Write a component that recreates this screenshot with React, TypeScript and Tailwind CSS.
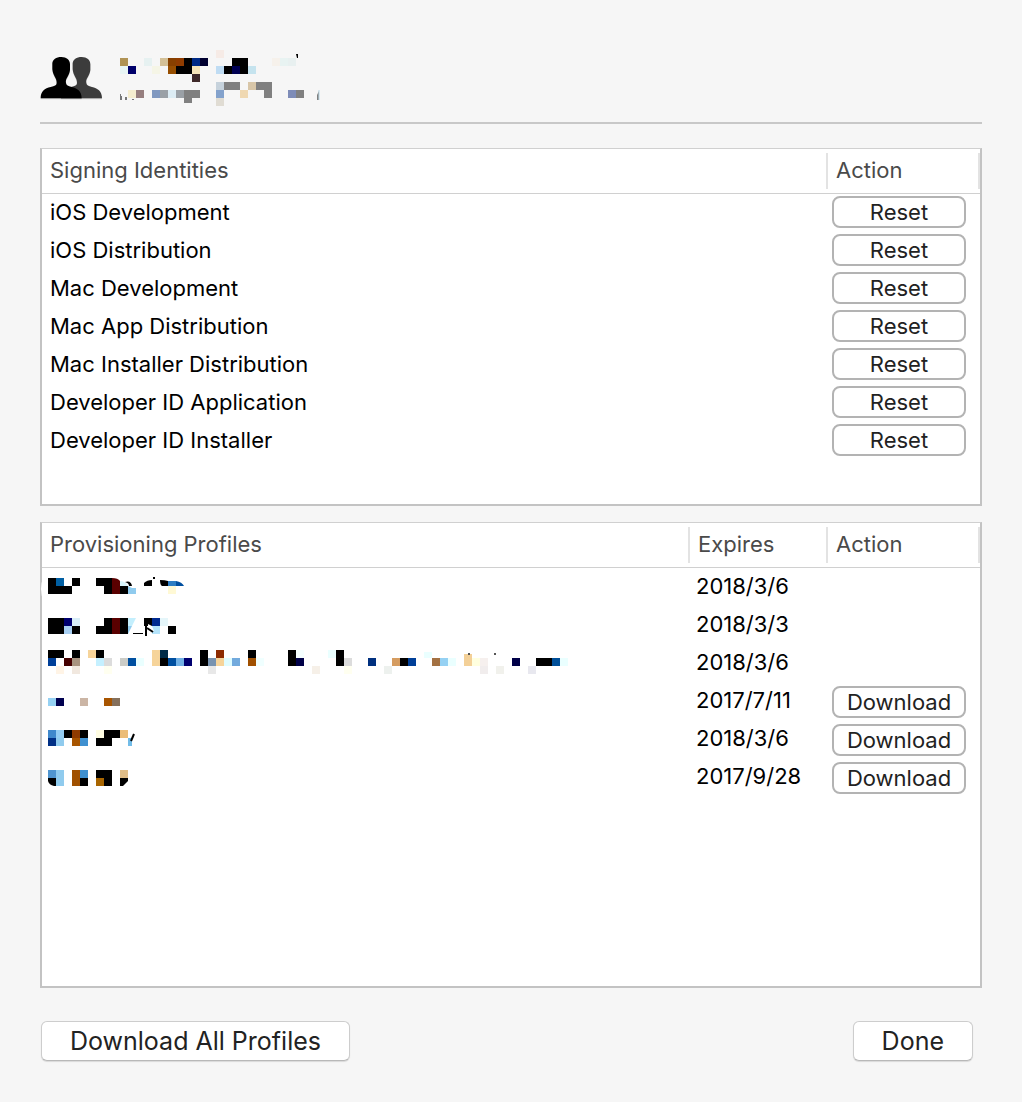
import type { ReactNode } from "react";

type Run = { x: number; y: number; c: string[]; w?: number; h?: number };

const K = "#000000";
const _ = "none";

/* Redacted text, drawn as runs of 8px blocks. */
function Mosaic({ runs, width, height, children }: { runs: Run[]; width: number; height: number; children?: ReactNode }) {
  return (
    <svg width={width} height={height} viewBox={`0 0 ${width} ${height}`} className="block overflow-visible" shapeRendering="crispEdges" aria-hidden="true">
      {runs.map((r, i) =>
        r.c.map((fill, j) =>
          fill === _ ? null : (
            <rect key={`${i}-${j}`} x={r.x + j * 8} y={r.y} width={r.w ?? 8} height={r.h ?? 8} fill={fill} />
          ),
        ),
      )}
      <g shapeRendering="geometricPrecision">{children}</g>
    </svg>
  );
}

const G = "#808080";

const nameRuns: Run[] = [
  { x: 96, y: 0, c: ["#f6ebe6"] },
  { x: 0, y: 8, c: ["#b09355", _, _, "#e6f1f1", _, "#d3c097", "#874000", "#903c00", K, "#002a85", "#000030", _, _, _, K, K, _, _, _, "#f6f1eb", "#e8f3f2", "#e8f0f0"] },
  { x: 0, y: 16, c: ["#e8f5f5", "#00006b", _, _, "#f5f5e6", _, "#964e00", K, K, "#f6e4b8", _, _, "#bfdcf3", K, "#000052", K, "#c5e3ee"] },
  { x: 72, y: 24, c: ["#3f2a2a"] },
  { x: 96, y: 32, c: ["#c6d2dc", G, G, _, "#d8c6a8", G, G] },
  { x: 8, y: 40, c: ["#f5edcf", "#967e7e", _, "#8098c0", "#9aa0a6", "#dcecf4", "#9aa0a6", G, G, _, _, "#84a2cc", _, _, "#efd8b2", _, _, G, _, _, "#7e8cb8", G] },
  { x: 64, y: 48, c: [G], h: 5 },
  { x: 96, y: 48, c: ["#e0dcd3"] },
];

function AccountIcon() {
  const person =
    "M94 51C110 51 120 60 120 72L120 90C119 98 116 105 112 112C108 118 107 122 108 129C109 136 114 138 125 141C141 145 155 152 155 175H32C32 153 44 145 62 141C74 138 80 136 80 129C80 121 78 117 75 112C71 104 68 98 67 88L67 70C68 59 78 51 94 51Z";
  return (
    <svg width={63} height={44} viewBox="30 48 189 132" role="img" aria-label="Team">
      <path d={person} fill="#000" opacity="0.15" transform="translate(0 3)" />
      <path d={person} fill="#000" opacity="0.15" transform="translate(61 3)" />
      <path d={person} fill="#3c3c3c" transform="translate(61 0)" />
      <path d={person} fill="#000" />
    </svg>
  );
}

type Profile = { label: string; expires: string; download?: boolean; width: number; runs: Run[]; extra?: ReactNode };

const profiles: Profile[] = [
  {
    label: "profile 1",
    expires: "2018/3/6",
    width: 144,
    runs: [
      { x: 0, y: 10, c: [K, "#005fa3", _, K, _, _, K, K] },
      { x: 0, y: 18, c: [K, K, K, _, _, _, _, K, "#5a0000", K] },
      { x: 120, y: 18, c: ["#fff9d5"] },
      { x: 105, y: 9, c: [K], w: 2, h: 2 },
    ],
    extra: (
      <>
        <path d="M-4 8Q-10 21 -4 34Z" fill="#fff" />
        <path d="M64 10Q70 10 72 13V18H64Z" fill="#5a0000" />
        <path d="M72 13Q77 13 80 18H72Z" fill="#d8f4fb" />
        <path d="M77 14Q83 12 84 18L81 18Q81 15 77 14Z" fill={K} />
        <path d="M80 18L84 20H88V26H80Z" fill="#90cbee" />
        <path d="M96 18V15Q99 12 104 12V18Z" fill={K} />
        <path d="M112 12Q117 12 120 13V18H114Q112 17 112 12Z" fill={K} />
        <path d="M120 13H128V18H120Z" fill="#2d7dc3" />
        <path d="M128 13Q134 14 136 18H128Z" fill="#004f9f" />
      </>
    ),
  },
  {
    label: "profile 2",
    expires: "2018/3/3",
    width: 136,
    runs: [
      { x: 0, y: 12, c: [K, K, "#000070", "#d8eef8", _, _, _, K, "#5a0000", K, "#c4effd", _, K, "#002a90", "#e5f6fa"] },
      { x: 0, y: 20, c: [K, K, "#a8cff2", K, _, _, K, K, "#5a0000", K, _, _, _, "#b5e4fb", _, K] },
      { x: 85, y: 27, c: [K], w: 10, h: 1 },
    ],
    extra: (
      <>
        <path d="M80 20H84L80 28Z" fill="#90cbee" />
        <path d="M84 20L88 12V20Z" fill="#fff" />
        <path d="M98 16V30" stroke={K} strokeWidth="2" />
        <path d="M100 28V18L104 20L106 25Z" fill="#fff" />
        <path d="M99 22L105 26" fill="none" stroke={K} strokeWidth="2" />
      </>
    ),
  },
  {
    label: "profile 3",
    expires: "2018/3/6",
    width: 520,
    runs: [
      { x: 0, y: 6, c: [K, K, _, K, _, "#f6d49a", K, _, _, _, _, _, _, "#f6d49a", "#002b48", _, _, _, _, K, _, "#8e2b00", _, _, _, K, _, _, _, _, K, "#f5ffff", _, _, _, "#eaffff", K] },
      { x: 0, y: 14, c: ["#003f98", _, "#450000", "#a8937f", _, _, "#c5f0ff", "#dcdcdc", _, "#cbccc7", "#004fa0", "#eaffff", _, "#f6d49a", K, "#004fa0", "#72b1e5", "#000070", _, K, "#7893b0", "#f6d49a", "#dffcff", "#72aadd", _, "#a05000", "#f0ffff", _, _, _, K, "#000048", _, _, _, _, K, "#dcdcdc", _, _, "#00307f", _, _, "#d59c60", K, "#003f98", _, _, "#a37142", "#95d1f3", "#eaffff", _, "#f3d098", "#ffffdf", "#f6f0ee", _, _, _, "#000048", _, _, K, K, "#004f98", "#eaffff"] },
      { x: 8, y: 22, c: ["#fff4e6", _, "#f1e8df", _, _, _, "#fffff0"] },
      { x: 160, y: 22, c: ["#e8e8e8"] },
      { x: 264, y: 22, c: ["#f6f0e8"] },
      { x: 296, y: 22, c: ["#fffff0"] },
      { x: 336, y: 22, c: ["#edf1ee"] },
      { x: 432, y: 22, c: ["#f1eded", _, "#f1f1ec", _, _, _, "#e8e8ef"] },
      { x: 376, y: 8, c: ["#eaffff"], h: 6 },
      { x: 416, y: 10, c: ["#f3d098"], h: 4 },
      { x: 420, y: 9, c: ["#555555"], w: 2, h: 2 },
      { x: 446, y: 9, c: ["#555555"], w: 2, h: 2 },
    ],
  },
  {
    label: "profile 4",
    expires: "2017/7/11",
    download: true,
    width: 88,
    runs: [{ x: 0, y: 16, c: ["#95d1f3", "#000050", _, _, "#cbb5a5", _, _, "#a85500", "#85705c"] }],
  },
  {
    label: "profile 5",
    expires: "2018/3/6",
    download: true,
    width: 88,
    runs: [
      { x: 0, y: 10, c: ["#3f88cc", "#95cdf3", K, "#8e3b00", K, _, "#fffde3", K, K, "#ebbd78"] },
      { x: 0, y: 18, c: ["#002f85", "#90cbee", _, "#a85500", "#3f90d0", _, K, K] },
      { x: 80, y: 18, c: ["#72bce8"], w: 4 },
    ],
    extra: <path d="M86 14L83 21" stroke={K} strokeWidth="2" />,
  },
  {
    label: "profile 6",
    expires: "2017/9/28",
    download: true,
    width: 88,
    runs: [
      { x: 0, y: 12, c: ["#4f95d0", "#90cbee", _, "#a05000", "#3f90d0", _, K, K, _, "#dfbd88"] },
      { x: 8, y: 20, c: ["#90cbee", _, "#a05000", K, _, "#a86500", K] },
    ],
    extra: (
      <>
        <path d="M0 20H8V28H6Q1 27 0 23Z" fill={K} />
        <path d="M72 20H80V23L75 28H72Z" fill={K} />
      </>
    ),
  },
];

const identities = [
  "iOS Development",
  "iOS Distribution",
  "Mac Development",
  "Mac App Distribution",
  "Mac Installer Distribution",
  "Developer ID Application",
  "Developer ID Installer",
];

const boxClass = "border-2 border-t border-[#c3c3c3] border-t-[#d0d0d0] bg-white";

function HeadCell({ children, divided, last }: { children: ReactNode; divided?: boolean; last?: boolean }) {
  return (
    <th scope="col" className="h-[45px] border-b border-[#d0d0d0] p-0 text-left font-normal text-[#4a4a4a]">
      <div
        className={`flex h-9 items-center border-[#e3e3e3] pb-0.5 pl-2 ${divided ? "border-l-2" : ""} ${last ? "border-r-2" : ""}`}
      >
        {children}
      </div>
    </th>
  );
}

function SmallButton({ children, label }: { children: ReactNode; label: string }) {
  return (
    <button
      type="button"
      aria-label={label}
      className="flex h-8 w-[134px] items-center justify-center rounded-lg border-2 border-[#b3b3b3] bg-white text-[#222]"
    >
      {children}
    </button>
  );
}

function LargeButton({ children }: { children: ReactNode }) {
  return (
    <button
      type="button"
      className="h-10 rounded-md border border-[#cdcdcd] border-b-[#b8b8b8] bg-white px-7 text-[25px] leading-8 text-[#222] shadow-[0_1px_1px_rgba(0,0,0,0.12)]"
    >
      {children}
    </button>
  );
}

export default function App() {
  return (
    <main className="flex min-h-screen flex-col bg-[#f6f6f6] px-10 pt-[50px] pb-[41px] font-['Inter',sans-serif] text-[22px] leading-8 text-black">
      <header className="flex h-[74px] items-start gap-[17px] border-b-2 border-[#c8c8c8]">
        <div className="pt-1.5">
          <AccountIcon />
        </div>
        <Mosaic runs={nameRuns} width={202} height={56}>
          <path d="M176 4H178V8H177Z" fill={K} />
          <path d="M0 44H1V50H0ZM1 46H2V50H1ZM5 47H7V50H5ZM12 49H14V50H12Z" fill="#777" />
          <path d="M197 50V45L199 41V50Z" fill={G} />
          <path d="M199 40V50" stroke="#b9d8e6" />
        </Mosaic>
      </header>

      <section className={`mt-6 min-h-[358px] ${boxClass}`}>
        <table className="w-full table-fixed border-separate border-spacing-0">
          <colgroup>
            <col />
            <col className="w-[154px]" />
          </colgroup>
          <thead>
            <tr>
              <HeadCell>Signing Identities</HeadCell>
              <HeadCell divided last>
                Action
              </HeadCell>
            </tr>
          </thead>
          <tbody>
            {identities.map((name) => (
              <tr key={name}>
                <td className="h-[38px] p-0 pb-0.5 pl-2">{name}</td>
                <td className="h-[38px] p-0 pb-0.5 pl-1.5">
                  <SmallButton label={`Reset ${name}`}>Reset</SmallButton>
                </td>
              </tr>
            ))}
          </tbody>
        </table>
      </section>

      <section className={`mt-4 flex-1 ${boxClass}`}>
        <table className="w-full table-fixed border-separate border-spacing-0">
          <colgroup>
            <col />
            <col className="w-[138px]" />
            <col className="w-[154px]" />
          </colgroup>
          <thead>
            <tr>
              <HeadCell>Provisioning Profiles</HeadCell>
              <HeadCell divided>Expires</HeadCell>
              <HeadCell divided last>
                Action
              </HeadCell>
            </tr>
          </thead>
          <tbody>
            {profiles.map((p) => (
              <tr key={p.label}>
                <td className="h-[38px] p-0 pl-1.5">
                  <Mosaic runs={p.runs} width={p.width} height={38}>
                    {p.extra}
                  </Mosaic>
                </td>
                <td className="h-[38px] p-0 pb-0.5 pl-2">{p.expires}</td>
                <td className="h-[38px] p-0 pt-0.5 pl-1.5">
                  {p.download && <SmallButton label={`Download ${p.label}`}>Download</SmallButton>}
                </td>
              </tr>
            ))}
          </tbody>
        </table>
      </section>

      <footer className="mt-[33px] flex justify-between pr-[9px] pl-px">
        <LargeButton>Download All Profiles</LargeButton>
        <LargeButton>Done</LargeButton>
      </footer>
    </main>
  );
}
